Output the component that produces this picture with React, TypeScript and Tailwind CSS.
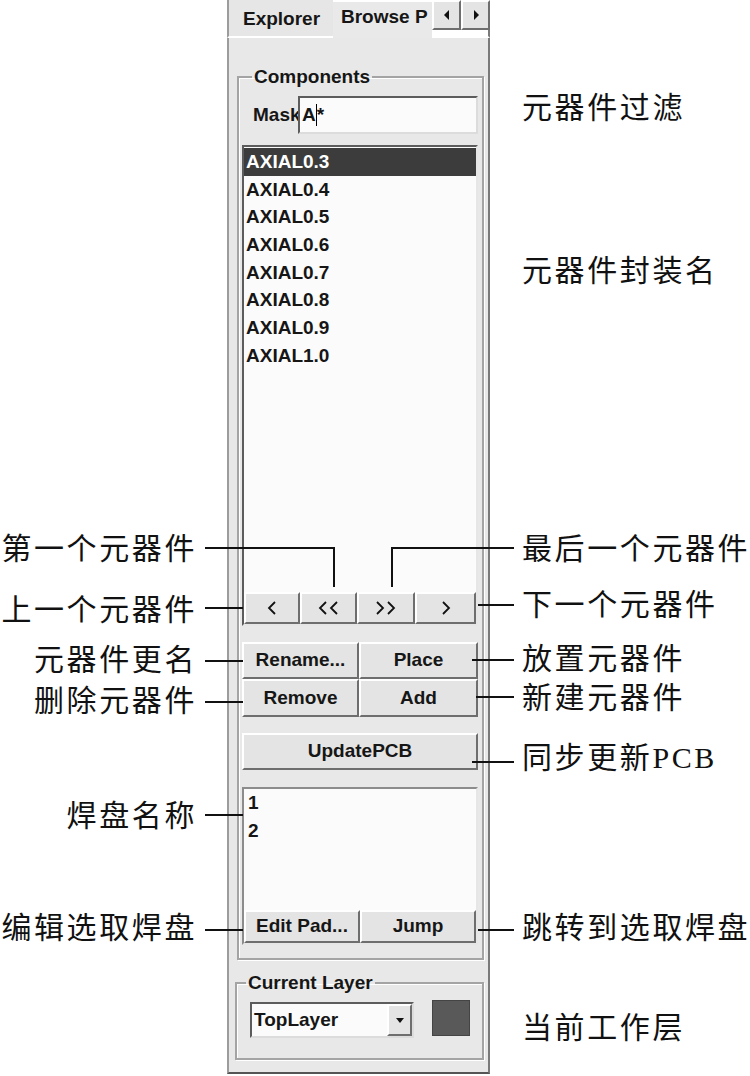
import React from "react";
import { twMerge } from "tailwind-merge";

const raised =
  "bg-[#e4e4e4] border-2 border-t-white border-l-white border-b-[#6e6e6e] border-r-[#6e6e6e] flex items-center justify-center text-[19px] font-bold text-[#161616]";
const sunken =
  "bg-[#fbfbfb] border-2 border-t-[#5c5c5c] border-l-[#5c5c5c] border-b-[#dcdcdc] border-r-[#dcdcdc]";
const etched = "border-2 border-[#a4a4a4] shadow-[inset_1px_1px_0_#fff,1px_1px_0_#fff] min-w-0 p-0";

const Btn = ({ children, className }: { children: React.ReactNode; className?: string }) => (
  <div className={twMerge(raised, className)}>{children}</div>
);

const parts = ["AXIAL0.3", "AXIAL0.4", "AXIAL0.5", "AXIAL0.6", "AXIAL0.7", "AXIAL0.8", "AXIAL0.9", "AXIAL1.0"];

// callout labels, centre y minus 18
const notes = [
  { t: "元器件过滤", c: "left-[522px] top-[90px]" },
  { t: "元器件封装名", c: "left-[522px] top-[253px]" },
  { t: "最后一个元器件", c: "left-[522px] top-[531px]" },
  { t: "下一个元器件", c: "left-[522px] top-[587px]" },
  { t: "放置元器件", c: "left-[522px] top-[641px]" },
  { t: "新建元器件", c: "left-[522px] top-[680px]" },
  { t: "同步更新PCB", c: "left-[522px] top-[740px]" },
  { t: "跳转到选取焊盘", c: "left-[522px] top-[910px]" },
  { t: "当前工作层", c: "left-[522px] top-[1010px]" },
  { t: "第一个元器件", c: "right-[553px] top-[531px]" },
  { t: "上一个元器件", c: "right-[553px] top-[592px]" },
  { t: "元器件更名", c: "right-[553px] top-[642px]" },
  { t: "删除元器件", c: "right-[553px] top-[683px]" },
  { t: "焊盘名称", c: "right-[553px] top-[798px]" },
  { t: "编辑选取焊盘", c: "right-[553px] top-[910px]" },
];

const lines = [
  "left-[205px] top-[547px] w-[130px] h-[2px]",
  "left-[333px] top-[547px] w-[2px] h-[40px]",
  "left-[391px] top-[547px] w-[123px] h-[2px]",
  "left-[391px] top-[547px] w-[2px] h-[40px]",
  "left-[205px] top-[607px] w-[38px] h-[2px]",
  "left-[478px] top-[604px] w-[36px] h-[2px]",
  "left-[205px] top-[660px] w-[38px] h-[2px]",
  "left-[472px] top-[659px] w-[42px] h-[2px]",
  "left-[205px] top-[701px] w-[38px] h-[2px]",
  "left-[476px] top-[696px] w-[38px] h-[2px]",
  "left-[472px] top-[761px] w-[42px] h-[2px]",
  "left-[205px] top-[814px] w-[38px] h-[2px]",
  "left-[205px] top-[929px] w-[38px] h-[2px]",
  "left-[478px] top-[929px] w-[36px] h-[2px]",
];

const Tri = ({ dir }: { dir: "l" | "r" | "d" }) => (
  <svg width="10" height="12" viewBox="0 0 10 12">
    {dir === "l" && <polygon points="7,1 7,11 2,6" fill="#111" />}
    {dir === "r" && <polygon points="3,1 3,11 8,6" fill="#111" />}
    {dir === "d" && <polygon points="1,4 9,4 5,9" fill="#111" />}
  </svg>
);

// thin chevrons used on the record navigation buttons
const Chev = ({ n, dir }: { n: 1 | 2; dir: "l" | "r" }) => (
  <svg width={n === 1 ? 10 : 22} height="16" viewBox={n === 1 ? "0 0 10 16" : "0 0 22 16"}>
    {[0, 1].slice(0, n).map((k) => (
      <polyline
        key={k}
        points={dir === "l" ? `${8 + k * 11},2 ${2 + k * 11},8 ${8 + k * 11},14` : `${2 + k * 11},2 ${8 + k * 11},8 ${2 + k * 11},14`}
        fill="none"
        stroke="#111"
        strokeWidth="1.8"
      />
    ))}
  </svg>
);

export default function App() {
  return (
    <div className="relative w-[750px] h-[1076px] bg-white overflow-hidden font-['Liberation_Sans',Arial,sans-serif] text-[#161616]">
      <div className="ml-[227px] w-[263px] h-[1074px] flex flex-col">
        {/* tab strip */}
        <div className="flex h-[38px] shrink-0">
          <div className="w-[106px] h-[38px] border-l-2 border-l-[#9c9c9c] border-b-2 border-b-white bg-[#e6e6e6] pl-[14px] text-[19px] font-bold leading-[38px]">
            Explorer
          </div>
          <div className="w-[99px] h-[38px] whitespace-nowrap bg-[#e9e9e9] border-t-2 border-t-white pl-[8px] text-[19px] font-bold leading-[30px]">
            Browse P
          </div>
          <div className="w-[58px] flex flex-col">
            <div className="flex h-[30px]">
              <Btn className="w-[29px] h-[30px]">
                <Tri dir="l" />
              </Btn>
              <Btn className="w-[29px] h-[30px]">
                <Tri dir="r" />
              </Btn>
            </div>
            <div className="flex-1 border-b-2 border-b-white border-r-2 border-r-[#7a7a7a]" />
          </div>
        </div>

        {/* body */}
        <div className="flex-1 flex flex-col bg-[#e8e8e8] border-l-2 border-l-[#9c9c9c] border-r-2 border-r-[#7a7a7a] border-b-2 border-b-[#555]">
          <fieldset className={twMerge(etched, "mt-[28px] ml-[8px] mr-[4px]")}>
            <legend className="ml-[13px] px-[2px] text-[19px] font-bold leading-[22px]">Components</legend>
            <div className="pt-[8px] pl-[3px] pr-[4px] pb-[13px] flex flex-col">
              <div className="flex h-[38px]">
                <div className="w-[56px] pl-[11px] overflow-hidden whitespace-nowrap text-[19px] font-bold leading-[38px]">
                  Mask
                </div>
                <div className={twMerge(sunken, "flex-1 flex items-center pl-[2px] text-[19px] font-bold")}>
                  A<span className="w-px h-[22px] bg-black" />*
                </div>
              </div>

              <div className={twMerge(sunken, "mt-[11px] h-[481px] flex flex-col border-b-[#e6e6e6] border-r-[#e6e6e6]")}>
                <div className="flex-1 pt-[1px]">
                  {parts.map((p, i) => (
                    <div
                      key={p}
                      className={twMerge(
                        "h-[27.7px] leading-[27.7px] pl-[2px] text-[19px] font-bold",
                        i === 0 && "bg-[#3c3c3c] text-white",
                      )}
                    >
                      {p}
                    </div>
                  ))}
                </div>
                <div className="flex h-[32px]">
                  <Btn className="w-[56px] h-full">
                    <Chev n={1} dir="l" />
                  </Btn>
                  <Btn className="w-[57px] h-full">
                    <Chev n={2} dir="l" />
                  </Btn>
                  <Btn className="w-[58px] h-full">
                    <Chev n={2} dir="r" />
                  </Btn>
                  <Btn className="flex-1 h-full">
                    <Chev n={1} dir="r" />
                  </Btn>
                </div>
              </div>

              <div className="mt-[16px] grid grid-cols-[117px_1fr]">
                <Btn className="h-[37px]">Rename...</Btn>
                <Btn className="h-[37px]">Place</Btn>
                <Btn className="h-[38px]">Remove</Btn>
                <Btn className="h-[38px]">Add</Btn>
              </div>

              <Btn className="mt-[16px] h-[37px]">UpdatePCB</Btn>

              <div className="mt-[17px] h-[158px] flex flex-col bg-[#fbfbfb] border-2 border-t-[#8c8c8c] border-l-[#8c8c8c] border-b-[#e6e6e6] border-r-[#e6e6e6]">
                <div className="flex-1 pl-[4px] text-[19px] font-bold leading-[28px]">
                  <div>1</div>
                  <div>2</div>
                </div>
                <div className="grid grid-cols-[116px_1fr] h-[33px]">
                  <Btn className="h-full">Edit Pad...</Btn>
                  <Btn className="h-full">Jump</Btn>
                </div>
              </div>
            </div>
          </fieldset>

          <fieldset className={twMerge(etched, "mt-[12px] ml-[6px] mr-[4px]")}>
            <legend className="ml-[9px] px-[2px] text-[19px] font-bold leading-[22px]">Current Layer</legend>
            <div className="pt-[6px] pl-[13px] pb-[20px] flex items-start">
              <div className={twMerge(sunken, "mt-[2px] w-[164px] h-[36px] flex items-stretch")}>
                <div className="flex-1 pl-[2px] text-[19px] font-bold leading-[32px]">TopLayer</div>
                <Btn className="w-[25px]">
                  <Tri dir="d" />
                </Btn>
              </div>
              <div className="ml-[18px] w-[38px] h-[36px] bg-[#595959] border border-[#444]" />
            </div>
          </fieldset>
        </div>
      </div>

      {lines.map((c) => (
        <div key={c} className={twMerge("absolute bg-[#111]", c)} />
      ))}
      {notes.map((n) => (
        <div
          key={n.t}
          className={twMerge(
            "absolute whitespace-nowrap text-[30px] leading-[36px] tracking-[2.6px] text-[#111] font-['Liberation_Serif','Noto_Sans_CJK_SC',serif]",
            n.c,
          )}
        >
          {n.t}
        </div>
      ))}
    </div>
  );
}
